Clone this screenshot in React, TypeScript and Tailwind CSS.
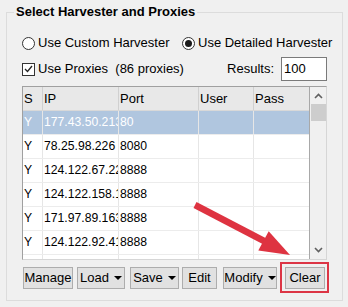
import React from 'react';

const rows = [
  { s: 'Y', ip: '177.43.50.213', port: '80', selected: true },
  { s: 'Y', ip: '78.25.98.226', port: '8080' },
  { s: 'Y', ip: '124.122.67.226', port: '8888' },
  { s: 'Y', ip: '124.122.158.17', port: '8888' },
  { s: 'Y', ip: '171.97.89.163', port: '8888' },
  { s: 'Y', ip: '124.122.92.41', port: '8888' },
  { s: '', ip: '', port: '' },
];

function DropArrow() {
  return (
    <svg width="8" height="4" viewBox="0 0 8 4" className="ml-[5px]">
      <path d="M0 0 L8 0 L4 4 Z" fill="#000" />
    </svg>
  );
}

function Btn({ w, ml, children }: { w: string; ml: string; children: React.ReactNode }) {
  return (
    <div className={`${w} ${ml} h-[22px] flex items-center justify-center border border-[#adadad] bg-[#e1e1e1] text-black`}>
      {children}
    </div>
  );
}

export default function App() {
  return (
    <div
      className="relative w-[348px] h-[307px] bg-[#f0f0f0] overflow-hidden text-[13px] text-black"
      style={{ fontFamily: '"Liberation Sans", Arial, sans-serif' }}
    >
      {/* Group box */}
      <div className="ml-[6px] mt-[12px] w-[337px] h-[289px] border border-[#dcdcdc]">
        <div className="ml-[7px] -mt-[9px] w-fit px-[2px] bg-[#f0f0f0] font-bold leading-[16px]">
          Select Harvester and Proxies
        </div>

        {/* Radios */}
        <div className="mt-[15px] pl-[15px] flex items-center h-[16px] leading-[16px]">
          <div className="w-[160px] flex items-center">
            <span className="w-[13px] h-[13px] rounded-full border border-[#333] bg-white" />
            <span className="ml-[3px]">Use Custom Harvester</span>
          </div>
          <div className="flex items-center">
            <span className="w-[13px] h-[13px] rounded-full border border-[#333] bg-white flex items-center justify-center">
              <span className="w-[7px] h-[7px] rounded-full bg-[#1a1a1a]" />
            </span>
            <span className="ml-[3px]">Use Detailed Harvester</span>
          </div>
        </div>

        {/* Proxies row */}
        <div className="mt-[6px] pl-[15px] pr-[15px] flex items-center h-[24px]">
          <span className="w-[13px] h-[13px] border border-[#333] bg-white flex items-center justify-center">
            <svg width="9" height="8" viewBox="0 0 9 8">
              <path d="M1 4 L3.5 6.5 L8 1" fill="none" stroke="#222" strokeWidth="1.3" />
            </svg>
          </span>
          <span className="ml-[3px] whitespace-pre">Use Proxies  (86 proxies)</span>
          <div className="flex-1" />
          <span className="mr-[7px]">Results:</span>
          <div className="w-[46px] h-[24px] border border-[#7a7a7a] bg-white flex items-center pl-[2px]">100</div>
        </div>

        {/* Table */}
        <div className="mt-[5px] ml-[15px] w-[305px] h-[174px] border border-[#a0a0a0] border-b-[#d6d6d6] border-r-[#d6d6d6] bg-white flex overflow-hidden">
          <div className="w-[286px] flex flex-col">
            <div className="flex h-[24px] bg-[#e8e8e8] border-b border-[#d8d8d8] leading-[23px] shrink-0">
              <div className="w-[20px] pl-[1px] border-r border-[#d0d0d0]">S</div>
              <div className="w-[76px] pl-[1px] border-r border-[#d0d0d0]">IP</div>
              <div className="w-[80px] pl-[1px] border-r border-[#d0d0d0]">Port</div>
              <div className="w-[55px] pl-[1px] border-r border-[#d0d0d0]">User</div>
              <div className="w-[55px] pl-[1px]">Pass</div>
            </div>
            {rows.map((r, i) => (
              <div
                key={i}
                className={`flex h-[24px] shrink-0 border-b border-[#ececec] leading-[23px] whitespace-nowrap text-[12.2px] ${
                  r.selected ? 'bg-[#b0c6df] text-white' : 'bg-white text-black'
                }`}
              >
                <div className="w-[20px] pl-[1px] border-r border-[#e6e6e6] overflow-hidden">{r.s}</div>
                <div className="w-[76px] pl-[1px] border-r border-[#e6e6e6] overflow-hidden">{r.ip}</div>
                <div className="w-[80px] pl-[1px] border-r border-[#e6e6e6] overflow-hidden">{r.port}</div>
                <div className="w-[55px] border-r border-[#e6e6e6]" />
                <div className="w-[55px]" />
              </div>
            ))}
          </div>
          {/* Scrollbar */}
          <div className="w-[17px] border-l border-[#a8a8a8] bg-[#f0f0f0] flex flex-col items-center">
            <svg width="9" height="6" viewBox="0 0 9 6" className="mt-[6px]">
              <path d="M1 5 L4.5 1.5 L8 5" fill="none" stroke="#606060" strokeWidth="1.6" />
            </svg>
            <div className="mt-[5px] w-[15px] h-[17px] bg-[#cdcdcd]" />
            <div className="flex-1" />
            <svg width="9" height="6" viewBox="0 0 9 6" className="mb-[6px]">
              <path d="M1 1 L4.5 4.5 L8 1" fill="none" stroke="#606060" strokeWidth="1.6" />
            </svg>
          </div>
        </div>

        {/* Buttons */}
        <div className="mt-[7px] ml-[16px] flex">
          <Btn w="w-[50px]" ml="ml-0">Manage</Btn>
          <Btn w="w-[48px]" ml="ml-[4px]">Load<DropArrow /></Btn>
          <Btn w="w-[49px]" ml="ml-[5px]">Save<DropArrow /></Btn>
          <Btn w="w-[35px]" ml="ml-[3px]">Edit</Btn>
          <Btn w="w-[54px]" ml="ml-[6px]">Modify<DropArrow /></Btn>
          <div className="relative ml-[8px]">
            <Btn w="w-[40px]" ml="ml-0">Clear</Btn>
            <div className="absolute -left-[5px] -top-[5px] -right-[4px] -bottom-[4px] border-2 border-[#dc3545]" />
          </div>
        </div>
      </div>

      {/* Annotation arrow */}
      <svg className="absolute left-0 top-0 pointer-events-none" width="348" height="307" viewBox="0 0 348 307">
        <line x1="195" y1="205" x2="266" y2="242" stroke="#de3341" strokeWidth="6.5" strokeLinecap="butt" />
        <path d="M290 255 L258.3 250.6 L268.7 231.2 Z" fill="#de3341" />
      </svg>
    </div>
  );
}
